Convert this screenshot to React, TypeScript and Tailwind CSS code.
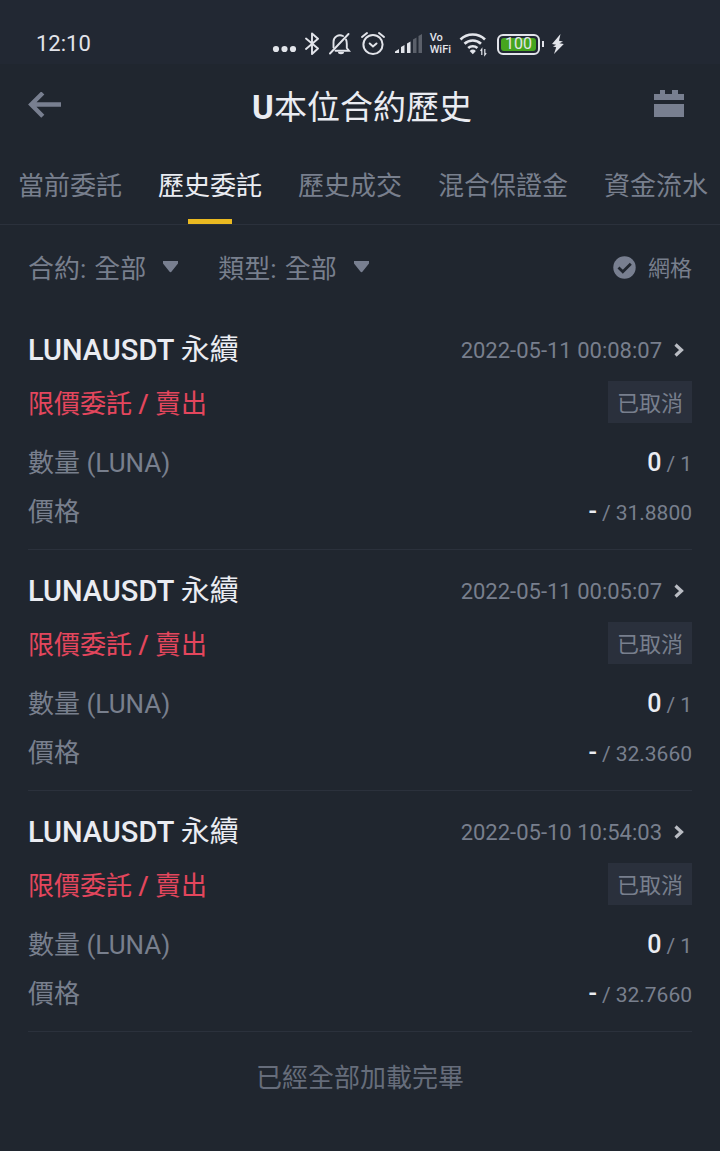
import { useState } from "react";

interface Order {
  id: number;
  symbol: string;
  time: string;
  filled: string;
  amount: string;
  price: string;
}

const TABS = ["當前委託", "歷史委託", "歷史成交", "混合保證金", "資金流水"];

const ORDERS: Order[] = [
  {
    id: 1,
    symbol: "LUNAUSDT",
    time: "2022-05-11 00:08:07",
    filled: "0",
    amount: "1",
    price: "31.8800",
  },
  {
    id: 2,
    symbol: "LUNAUSDT",
    time: "2022-05-11 00:05:07",
    filled: "0",
    amount: "1",
    price: "32.3660",
  },
  {
    id: 3,
    symbol: "LUNAUSDT",
    time: "2022-05-10 10:54:03",
    filled: "0",
    amount: "1",
    price: "32.7660",
  },
];

function StatusBar() {
  return (
    <div className="flex h-16 items-center justify-between bg-[#222833] pt-6 pr-[156px] pl-9 text-[#e2e4ea]">
      <span className="text-[22px] leading-6">12:10</span>
      <div className="flex items-center gap-2">
        <svg width="25" height="26" viewBox="0 0 25 26" fill="currentColor" aria-hidden="true">
          <circle cx="4" cy="18" r="3.1" />
          <circle cx="12.5" cy="18" r="3.1" />
          <circle cx="21" cy="18" r="3.1" />
        </svg>
        <svg width="16" height="26" viewBox="1 0 16 26" fill="none" stroke="currentColor" strokeWidth="1.9" aria-hidden="true">
          <path d="M2 7.500 14 17.500 8 23V2.500l6 5.300L2 18" strokeLinejoin="round" strokeLinecap="round" />
        </svg>
        <svg width="23" height="26" viewBox="0 0 23 26" fill="none" stroke="currentColor" strokeWidth="1.9" aria-hidden="true">
          <path d="M4.500 16.500V11a6.500 6.500 0 0 1 9.500-6M17 8.500c.6 1.300.8 2.800.8 4.500v4l2.200 2.700H6.500" strokeLinecap="round" />
          <path d="M1 22.500 19.500 3" strokeLinecap="round" />
          <path d="M9 21h6a3 2.200 0 0 1-6 0Z" fill="currentColor" stroke="none" />
        </svg>
        <svg width="26" height="26" viewBox="-1 0 26 26" fill="none" stroke="currentColor" strokeWidth="2" strokeLinecap="round" aria-hidden="true">
          <circle cx="12" cy="13.500" r="9.600" />
          <path d="M1 6 6 2M23 6 18 2M8.700 12.500l3.300 3 3.500-3" />
        </svg>
        <svg width="28" height="26" viewBox="0 0 28 26" fill="currentColor" aria-hidden="true">
          <path d="M1 22v-1.500L5 18v4ZM7 22v-6l3.500-2v8ZM13 22V12.500l3.500-2V22Z" />
          <path d="M19 22V8.500l3.500-2V22ZM24.500 22V5L28 3v19Z" opacity="0.3" />
        </svg>
        <div className="flex flex-col text-[11px] leading-3 font-medium">
          <span>Vo</span>
          <span>WiFi</span>
        </div>
        <svg width="28" height="26" viewBox="0 0 28 26" fill="none" stroke="currentColor" strokeWidth="2.600" aria-hidden="true">
          <path d="M1.500 8.500a17.500 17.500 0 0 1 24.500 0M5.500 12.800a12 12 0 0 1 16.500 0M9.200 17a6.800 6.800 0 0 1 9.200 0" />
          <path d="M13.800 23.200 10.700 20a4.600 4.600 0 0 1 6.200 0Z" fill="currentColor" stroke="none" />
          <path d="M22.800 24v-6l-1.300 1.800M25.800 18v6l1.400-1.800" strokeWidth="1.200" />
        </svg>
        <div className="ml-0.5 flex items-center gap-0.5">
          <div className="rounded-md border-2 border-current p-[2px]">
            <div className="flex h-[13px] w-[35px] items-center justify-center rounded-[3px] bg-[#46a51f] text-base leading-none">
              100
            </div>
          </div>
          <div className="h-1.5 w-[2px] bg-current" />
        </div>
        <svg width="12" height="26" viewBox="0 0 12 26" fill="currentColor" aria-hidden="true">
          <path d="M8.500 3 0 13l4.200.8-3.200 1.700 3.200.8L2 23l9.800-10-4.300-.8L11 10.500l-4-.7Z" />
        </svg>
      </div>
    </div>
  );
}

function PageHeader() {
  return (
    <header className="flex h-[84px] items-center justify-between pr-9 pl-7">
      <button type="button" aria-label="返回" className="w-[34px] text-[#787f90]">
        <svg width="34" height="28" viewBox="0 0 34 28" fill="none" stroke="currentColor" strokeWidth="4.400">
          <path d="M33 12.500H3.500M14.800 1 3.200 12.500l11.600 11.700" />
        </svg>
      </button>
      <h1 className="pt-1 pl-2 text-[33px] leading-[48px] text-[#eaecf2]">
        <span className="font-bold">U</span>本位合約歷史
      </h1>
      <button type="button" aria-label="選擇日期" className="w-[30px] text-[#787f90]">
        <svg width="30" height="32" viewBox="0 0 30 32" fill="currentColor">
          <path d="M0 4h6V0h5v4h7V0h6v4h6v6H0ZM0 14h30v13H0Z" />
        </svg>
      </button>
    </header>
  );
}

interface FilterSelectProps {
  id: string;
  label: string;
}

function FilterSelect({ id, label }: FilterSelectProps) {
  return (
    <div className="flex items-center">
      <label htmlFor={id} className="pt-1">
        {label}:
      </label>
      <select id={id} className="ml-2 w-[53px] appearance-none bg-transparent pt-1 leading-9 outline-none">
        <option>全部</option>
      </select>
      <svg width="15" height="12" viewBox="0 0 15 12" fill="#787f90" className="ml-4" aria-hidden="true">
        <path d="M0 0h15v2.500L8.800 10.300a1.600 1.600 0 0 1-2.600 0L0 2.500Z" />
      </svg>
    </div>
  );
}

function OrderItem({ order }: { order: Order }) {
  return (
    <li className="border-b border-[#2b313c] pt-5 pb-[13px]">
      <div className="flex h-[42px] items-center justify-between">
        <h2 className="text-[29px] leading-[42px] font-medium text-[#eaecf2]">
          {order.symbol} <span className="font-normal">永續</span>
        </h2>
        <a href="#" className="flex items-center gap-3 pr-2 text-[22px] text-[#787f8d]">
          {order.time}
          <svg width="10" height="14" viewBox="0 0 10 14" fill="none" stroke="#b9bcc3" strokeWidth="3.200" aria-hidden="true">
            <path d="m1.500 1.500 6 5.500-6 5.500" />
          </svg>
        </a>
      </div>
      <div className="mt-[10px] flex h-[42px] items-center justify-between">
        <p className="pt-1 text-[26px] text-[#e4465d]">
          限價委託 <span className="font-medium">/</span> 賣出
        </p>
        <span className="h-[42px] bg-[#2a303c] px-[9px] pt-1 text-[22px] leading-[38px] text-[#787f8d]">已取消</span>
      </div>
      <dl className="mt-4 flex flex-col gap-px text-[#787f8d]">
        <div className="flex h-12 items-center justify-between">
          <dt className="text-[26px]">數量 (LUNA)</dt>
          <dd className="flex items-baseline gap-[5px] text-[21px]">
            <span className="text-[25px] font-medium text-[#eaecf2]">{order.filled}</span>
            <span>/</span>
            <span>{order.amount}</span>
          </dd>
        </div>
        <div className="flex h-12 items-center justify-between">
          <dt className="text-[26px]">價格</dt>
          <dd className="flex items-baseline gap-[5px] text-[21px]">
            <span className="text-[25px] font-medium text-[#eaecf2]">-</span>
            <span>/</span>
            <span>{order.price}</span>
          </dd>
        </div>
      </dl>
    </li>
  );
}

export default function App() {
  const [activeTab, setActiveTab] = useState(1);
  const [grid, setGrid] = useState(true);

  return (
    <div className="min-h-screen bg-[#20262f] font-['Roboto','Noto_Sans_CJK_TC',sans-serif]">
      <StatusBar />
      <PageHeader />

      <nav className="flex gap-9 overflow-hidden border-b border-[#2b313c] pl-[18px]">
        {TABS.map((tab, i) => (
          <button
            key={tab}
            type="button"
            onClick={() => setActiveTab(i)}
            className={
              i === activeTab
                ? "flex h-[76px] shrink-0 flex-col items-center justify-between pt-5 text-[26px] leading-9 text-[#eaecf2]"
                : "flex h-[76px] shrink-0 flex-col items-center justify-between pt-5 text-[26px] leading-9 text-[#787f8d]"
            }
          >
            {tab}
            {i === activeTab ? <span className="h-[5px] w-11 bg-[#eab921]" /> : null}
          </button>
        ))}
      </nav>

      <div className="flex h-[84px] items-center justify-between px-7 text-[26px] text-[#787f8d]">
        <div className="flex items-center gap-10">
          <FilterSelect id="contract" label="合約" />
          <FilterSelect id="type" label="類型" />
        </div>
        <label className="flex items-center gap-3 text-[22px]">
          <input
            type="checkbox"
            checked={grid}
            onChange={(e) => setGrid(e.target.checked)}
            className="peer sr-only"
          />
          <svg width="23" height="23" viewBox="0 0 23 23" className="text-[#787f90] opacity-50 peer-checked:opacity-100" aria-hidden="true">
            <circle cx="11.500" cy="11.500" r="11.200" fill="currentColor" />
            <path d="m5.500 11.500 4.300 4.200 8-8" fill="none" stroke="#20262f" strokeWidth="2.800" />
          </svg>
          <span className="pt-0.5">網格</span>
        </label>
      </div>

      <ul className="px-7">
        {ORDERS.map((order) => (
          <OrderItem key={order.id} order={order} />
        ))}
      </ul>

      <p className="py-[26px] text-center text-[26px] leading-10 text-[#666d7b]">已經全部加載完畢</p>
    </div>
  );
}
